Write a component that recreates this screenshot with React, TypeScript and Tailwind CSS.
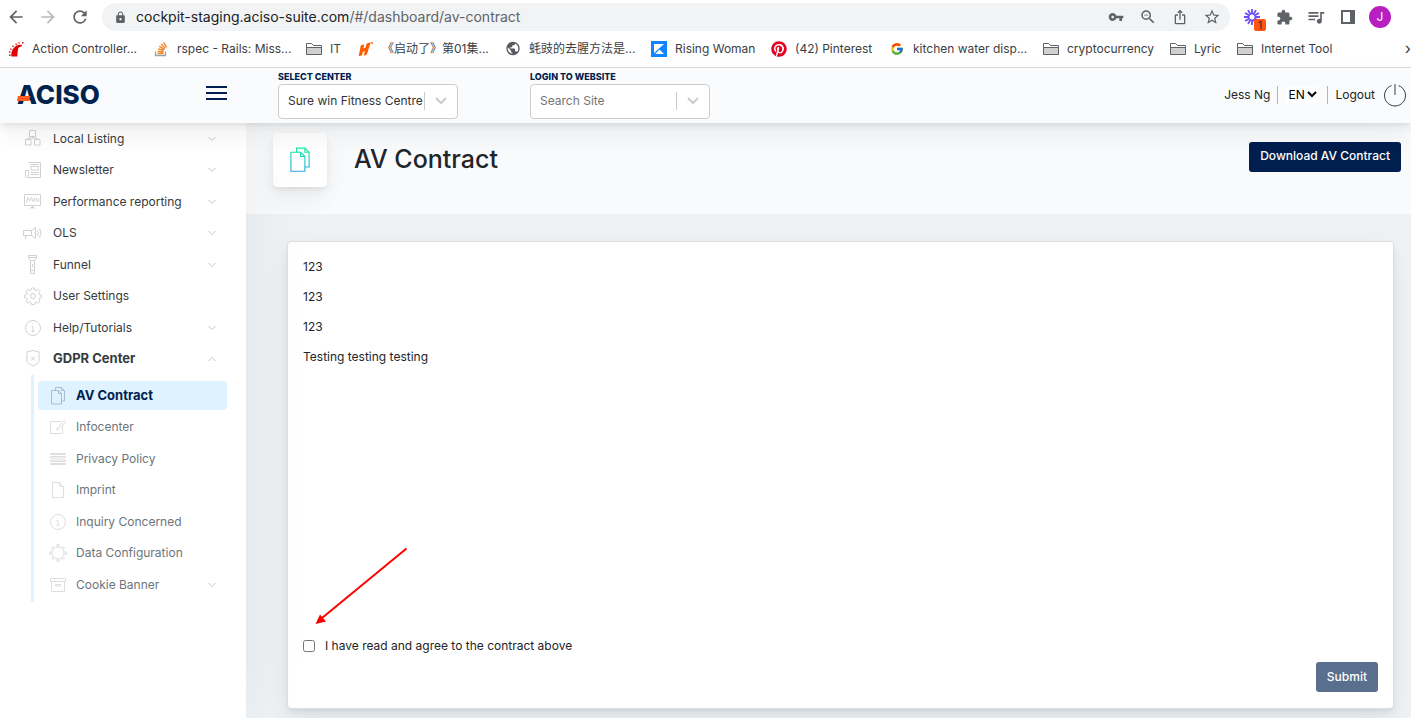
import React, { useState } from 'react';
import {
  MdArrowBack,
  MdArrowForward,
  MdExtension,
  MdIosShare,
  MdLock,
  MdPublic,
  MdQueueMusic,
  MdRefresh,
  MdStarOutline,
  MdVpnKey,
  MdZoomOut,
} from 'react-icons/md';
import { FcGoogle } from 'react-icons/fc';
import { FaPinterest } from 'react-icons/fa';

/* ---------- Bookmark icons ---------- */

const Folder = () => (
  <svg width="16" height="16" viewBox="0 0 16 16" fill="none" stroke="#5f6368">
    <path d="M.5 13.500v-11h5l2 2h8v9z" fill="#fff" />
    <path d="M.5 6.500h15v7H.5z" fill="#d0d0d0" />
  </svg>
);

const Rails = () => (
  <svg width="16" height="16" viewBox="0 0 16 16" fill="#e00000">
    <path d="M3.300 15.500c-.3-4 .7-7 3.200-9.300 2.200-2 4.700-2.800 7.500-2.200l-.3 1.500c-2.200 0-3.400 1-3.700 3-.3 2.500-.8 4.500-.6 7z" />
    <path d="M1 13.500h1.500V15H1zM1 10.200l1.600.4-.3 1.200-1.500-.4zM2.500 7.200l1.300.8-.7 1-1.300-.8zM5 4.200l1 1.200-1 .8-1-1.200zM8.500 2.200l.5 1.400-1.200.5-.5-1.400zM11.500 1.200l.2 1.400-1.200.2-.2-1.400zM14 1h1.500v1.500H14z" />
  </svg>
);

const StackOverflow = () => (
  <svg width="16" height="16" viewBox="0 0 16 16" fill="none">
    <path d="M2.500 10.500v4h10v-4" stroke="#a0a3a6" strokeWidth="1.300" />
    <path d="M4.500 12.500h6M4.600 10.300l5.900.7M5.100 7.900l5.700 1.600M6.300 5.400l5.100 3M8.200 3l4 4.400M10.600 1.300l3 5.100" stroke="#f48024" strokeWidth="1.300" />
  </svg>
);

const VideoSite = () => (
  <svg width="16" height="16" viewBox="0 0 16 16" fill="#ff5a00">
    <path d="M2.800 4.500l3.600-1.300-1 4.300 2-.8 1.300-4.200 4-1.300L8.900 13.500l-3.200 1.300 1.200-4.800-2 .8-1 3.700-3.200.5z" />
    <path d="M12.500 1l2.300.6.4 1.600-1.700-.8z" />
  </svg>
);

const Kickflip = () => (
  <svg width="16" height="16" viewBox="0 0 16 16">
    <path d="M0 0h16v16H0z" fill="#1184ff" />
    <path d="M3 3h10L3 12zM8.500 8.500l4.500 4.500H4z" fill="#fff" />
  </svg>
);

const BOOKMARKS = [
  { label: 'Action Controller...', icon: <Rails />, width: 'w-[105px]' },
  { label: 'rspec - Rails: Miss...', icon: <StackOverflow />, width: 'w-[113px]' },
  { label: 'IT', icon: <Folder />, width: 'w-3' },
  { label: '《启动了》第01集...', icon: <VideoSite />, width: 'w-[107px]' },
  { label: '蚝豉的去腥方法是...', icon: <MdPublic size={17} color="#55585c" />, width: 'w-[106px]' },
  { label: 'Rising Woman', icon: <Kickflip />, width: 'w-20' },
  { label: '(42) Pinterest', icon: <FaPinterest size={16} color="#e60023" />, width: 'w-[78px]' },
  { label: 'kitchen water disp...', icon: <FcGoogle size={14} />, width: 'w-[114px]' },
  { label: 'cryptocurrency', icon: <Folder />, width: 'w-[87px]' },
  { label: 'Lyric', icon: <Folder />, width: 'w-[27px]' },
  { label: 'Internet Tool', icon: <Folder />, width: 'w-[72px]' },
];

/* ---------- Line icons of the app ---------- */

const LineIcon: React.FC<{ children: React.ReactNode; className?: string }> = ({ children, className }) => (
  <svg viewBox="0 0 20 20" fill="none" stroke="currentColor" strokeWidth="1" className={`size-5 shrink-0 ${className ?? ''}`}>
    {children}
  </svg>
);

const CopyShape = () => (
  <>
    <path d="M3.500 4.500h7l3 3v10.500h-10zM10.500 4.500v3h3" />
    <path d="M7.500 4.500v-3h6l3 3v10.500h-3M13.500 1.500v3h3" />
  </>
);

const InfoShape = () => (
  <>
    <circle cx="10" cy="10" r="7.500" />
    <path d="M10 8.500v5M8.500 8.500H10M8.500 13.500h3M10 5.500v1" />
  </>
);

const MENU = [
  { label: 'Local Listing', arrow: true, icon: <path d="M6.500 1.500h6v6h-6zM2.500 10.500h5.500v5.500h-5.500zM11.500 10.500h5.500v5.500h-5.500zM9.500 7.500v2M5 10.500v-1.500h9v1.500" /> },
  { label: 'Newsletter', arrow: true, icon: <path d="M5.500 2.500h12v15H3.500a1 1 0 0 1-1-1v-6h3v6M8 6.500h7.500v3.500H8zM8 4.500h7.500M8 12.500h7.500M8 14.500h7.500" /> },
  { label: 'Performance reporting', arrow: true, icon: <path d="M1.500 2.500h16v11h-16zM9.500 13.500v3M6.500 16.500l3-1.500 3 1.500M3.500 10.500l1.500-5L7 9l1.500-3.500L10.500 10 12 5.500M16 8a1.500 1.500 0 1 1-3 0 1.500 1.500 0 0 1 3 0z" /> },
  { label: 'OLS', arrow: true, icon: <path d="M.5 7.500h8l4-3v11l-4-3h-8zM2.500 12.500v3.500M8.500 7.500v5M14.500 7q1.500 3 0 6M16.500 5q3 5 0 10" /> },
  { label: 'Funnel', arrow: true, icon: <path d="M5.500.5h8v2l-2 3v13h-4v-13l-2-3zM5.500 2.500h8M7.500 5.500h4M9.500 9v3M7.500 15.500h4" /> },
  { label: 'User Settings', arrow: false, icon: <><circle cx="10" cy="10" r="2.500" /><path d="M8.600 2h2.800l.5 2 1.300.6 1.900-1.200 1.900 1.900-1.200 1.900.6 1.400 2 .5v2.400l-2 .5-.6 1.400 1.200 1.900-1.900 1.900-1.900-1.200-1.300.6-.5 2H8.600l-.5-2-1.300-.6-1.900 1.200L3 15.400l1.200-1.900-.6-1.400-2-.5V9.100l2-.5.6-1.400L3 5.300l1.900-1.900 1.900 1.200L8.100 4z" /></> },
  { label: 'Help/Tutorials', arrow: true, icon: <InfoShape /> },
];

const GDPR_MENU = [
  { label: 'AV Contract', arrow: false, icon: <CopyShape /> },
  { label: 'Infocenter', arrow: false, icon: <path d="M13 4.500H2.500v12h12V8.500M17.500 2.500l-8 8-1 2.500 2.500-1 7-7.500" /> },
  { label: 'Privacy Policy', arrow: false, icon: <path d="M2.500 4.500h15v1h-15zM2.500 7.500h15v1.500h-15zM2.500 11h15v1.500h-15zM2.500 14.500h15v1h-15z" /> },
  { label: 'Imprint', arrow: false, icon: <path d="M4.500 2.500h7l4 4v11h-11zM11.500 2.500v4h4" /> },
  { label: 'Inquiry Concerned', arrow: false, icon: <InfoShape /> },
  { label: 'Data Configuration', arrow: false, icon: <><circle cx="10" cy="10" r="6" /><path d="M9 4V1.500h2V4M9 16v2.500h2V16M4 9H1.500v2H4M16 9h2.500v2H16M5 6.500L3.500 5 5 3.500 6.500 5M15 6.500L16.500 5 15 3.500 13.500 5M5 13.500L3.500 15 5 16.500 6.500 15M15 13.500l1.500 1.500-1.500 1.500-1.500-1.500" /></> },
  { label: 'Cookie Banner', arrow: true, icon: <path d="M2.500 3.500h15v3h-15zM3.500 6.500v10h13v-10M7.500 9.500h5v1.500h-5z" /> },
];

const Chevron: React.FC<{ up?: boolean }> = ({ up }) => (
  <svg viewBox="0 0 10 6" className="ml-auto h-1.5 w-2.5 shrink-0 text-[#c4c7ca]" fill="none" stroke="currentColor">
    <path d={up ? 'M1.500 5L5 1.500 8.500 5' : 'M1.500 1L5 4.500 8.500 1'} />
  </svg>
);

/* ---------- Browser ---------- */

interface ToolButtonProps {
  label: string;
  children: React.ReactNode;
}

const ToolButton: React.FC<ToolButtonProps> = ({ label, children }) => (
  <button aria-label={label} className="flex size-4 items-center justify-center [&>*]:shrink-0">
    {children}
  </button>
);

const BrowserBar = () => (
  <div className="border-b border-[#dadce0] bg-white">
    <div className="flex h-[34px] items-center pl-1.5 pr-[23px] text-[#5f6368]">
      <button aria-label="Back" className="mr-3"><MdArrowBack size={20} /></button>
      <button aria-label="Forward" className="mr-3 text-[#b8babd]"><MdArrowForward size={20} /></button>
      <button aria-label="Reload" className="mr-3"><MdRefresh size={20} /></button>
      <div className="flex h-7 min-w-0 flex-1 items-center rounded-full bg-[#f1f3f4] pl-3 pr-2.5">
        <MdLock size={13} className="mr-[9px] shrink-0" />
        <span className="flex-1 truncate text-sm text-[#5f6368]">
          <span className="text-[#202124]">cockpit-staging.aciso-suite.com</span>/#/dashboard/av-contract
        </span>
        <div className="flex items-center gap-4">
          <ToolButton label="Passwords"><MdVpnKey size={16} /></ToolButton>
          <ToolButton label="Zoom out"><MdZoomOut size={18} /></ToolButton>
          <ToolButton label="Share"><MdIosShare size={16} /></ToolButton>
          <ToolButton label="Bookmark this page"><MdStarOutline size={18} /></ToolButton>
        </div>
      </div>
      <div className="ml-3.5 flex items-center gap-4">
        <button aria-label="Loom, 1 notification" className="relative size-4">
          <svg viewBox="0 0 16 16" className="size-4" stroke="#6a4df5" strokeWidth="1.800" fill="none">
            <path d="M10.500 8H16M10.200 9.200l4.700 2.800M9.200 10.200l2.800 4.700M8 10.500V16M6.800 10.200L4 14.900M5.800 9.200L1.100 12M5.500 8H0M5.800 6.800L1.100 4M6.800 5.800L4 1.100M8 5.500V0M9.200 5.800L12 1.100M10.200 6.800L14.900 4" />
          </svg>
          <span className="absolute left-2.5 top-2.5 h-3 w-3 rounded-xs bg-[#ff5310] text-center text-[10px] leading-3 text-[#202124]">1</span>
        </button>
        <ToolButton label="Extensions"><MdExtension size={17} /></ToolButton>
        <ToolButton label="Media"><MdQueueMusic size={20} /></ToolButton>
        <ToolButton label="Side panel"><span className="size-3.5 border-2 border-r-[5px] border-[#5f6368]" /></ToolButton>
        <ToolButton label="Profile">
          <span className="size-[22px] rounded-full bg-[#b81fc0] text-xs leading-[22px] text-white">J</span>
        </ToolButton>
      </div>
    </div>
    <nav className="flex h-[33px] items-center gap-4 pb-1 pl-2 text-xs text-[#3c4043]">
      {BOOKMARKS.map((b) => (
        <a key={b.label} href="#" className="flex shrink-0 items-center gap-2">
          <span className="flex size-4 items-center justify-center">{b.icon}</span>
          <span className={`whitespace-nowrap ${b.width}`}>{b.label}</span>
        </a>
      ))}
      <button aria-label="More bookmarks" className="ml-auto shrink-0 pb-0.5 text-base leading-4">›</button>
    </nav>
  </div>
);

/* ---------- App ---------- */

interface PickerProps {
  id: string;
  label: string;
  value: string;
  placeholder?: boolean;
}

const Picker: React.FC<PickerProps> = ({ id, label, value, placeholder }) => (
  <div className="w-[180px]">
    <label htmlFor={id} className="block text-[9px] font-extrabold uppercase leading-3 text-[#001f4f]">{label}</label>
    <div className="mt-px flex h-[35px] items-center rounded border border-[#ccc] bg-white">
      <select
        id={id}
        className={`h-full min-w-0 flex-1 appearance-none pl-[9px] outline-none ${placeholder ? 'text-[#757575]' : 'text-[#333]'}`}
      >
        <option>{value}</option>
      </select>
      <span className="h-[18px] w-px bg-[#ccc]" />
      <svg viewBox="0 0 12 8" className="mx-2.5 h-2 w-3" fill="none" stroke="#ccc" strokeWidth="2">
        <path d="M1 1l5 5 5-5" />
      </svg>
    </div>
  </div>
);

const Header = () => (
  <header className="relative z-20 flex h-[55px] items-center bg-[#fafbfc] pb-0.5 text-xs text-[#212529] shadow-[0_7px_35px_rgba(4,9,20,0.03),0_15px_22px_rgba(4,9,20,0.03),0_4px_8px_rgba(4,9,20,0.05),0_2px_3px_rgba(4,9,20,0.03)]">
    <div className="flex w-[246px] shrink-0 items-center justify-between pl-[17px] pr-[19px]">
      <a href="#" className="relative text-[26px] font-extrabold leading-7 text-[#00224f]">
        ACISO
        <svg viewBox="0 0 14 5" className="absolute left-0 top-[15px] h-[5px] w-3.5">
          <path d="M1 0h12.500L12 5H0z" fill="#ff5a1f" />
        </svg>
      </a>
      <button aria-label="Toggle menu" className="flex w-[21px] flex-col gap-1 pb-1">
        <span className="h-0.5 bg-[#001f4f]" />
        <span className="h-0.5 bg-[#001f4f]" />
        <span className="h-0.5 bg-[#001f4f]" />
      </button>
    </div>
    <div className="ml-8 flex gap-[72px]">
      <Picker id="center" label="Select center" value="Sure win Fitness Centre" />
      <Picker id="site" label="Login to website" value="Search Site" placeholder />
    </div>
    <div className="ml-auto flex items-center pr-1">
      <span>Jess Ng</span>
      <span className="ml-[7px] h-[18px] w-px bg-[#adb5bd]" />
      <div className="mx-2 flex items-center bg-white px-0.5 text-black">
        <select aria-label="Language" className="appearance-none outline-none">
          <option>EN</option>
        </select>
        <svg viewBox="0 0 10 7" className="ml-0.5 h-[7px] w-2.5" fill="none" stroke="#000" strokeWidth="2">
          <path d="M1 1l4 4 4-4" />
        </svg>
      </div>
      <span className="mr-[7px] h-[18px] w-px bg-[#adb5bd]" />
      <button className="flex items-center gap-2">
        Logout
        <svg viewBox="0 0 24 24" className="size-6" fill="none" stroke="#343a40">
          <path d="M12 1v11M8.500 2.600a10.500 10.500 0 1 0 7 0" />
        </svg>
      </button>
    </div>
  </header>
);

const rowHeight = (i: number) => (i % 2 === 0 ? 'h-[31px]' : 'h-8');

const Sidebar = () => {
  const [open, setOpen] = useState(true);
  const [active, setActive] = useState('AV Contract');

  return (
    <aside className="relative z-10 w-[246px] shrink-0 bg-white text-xs text-[#343a40] shadow-[7px_0_60px_rgba(0,0,0,0.05)]">
      <ul>
        {MENU.map((m, i) => (
          <li key={m.label}>
            <a href="#" className={`flex items-center pl-[23px] pr-[29px] ${rowHeight(i)}`}>
              <LineIcon className="mr-2.5 text-[#cfd2d5]">{m.icon}</LineIcon>
              {m.label}
              {m.arrow && <Chevron />}
            </a>
          </li>
        ))}
        <li>
          <button onClick={() => setOpen(!open)} className="flex h-8 w-full items-center pl-[23px] pr-[29px] text-[13px] font-bold">
            <LineIcon className="mr-2.5 text-[#cfd2d5]">
              <path d="M10 1.500l6 1.500v9c0 2-3 3-6 5-3-2-6-3-6-5V3zM8 7.500l4 4M12 7.500l-4 4" />
            </LineIcon>
            GDPR Center
            <Chevron up={open} />
          </button>
          {open && (
            <ul className="ml-[31px] mr-[19px] border-l-[3px] border-[#def2ff] pb-0.5 pl-1 pt-[5px] text-[#6c757d]">
              {GDPR_MENU.map((m, i) => (
                <li key={m.label} className={`flex items-center ${rowHeight(i)}`}>
                  <a
                    href="#"
                    onClick={() => setActive(m.label)}
                    className={`flex h-[29px] w-full items-center rounded-sm px-2.5 ${active === m.label ? 'bg-[#def2ff] text-[13px] font-bold text-[#001f4f]' : ''}`}
                  >
                    <LineIcon className={`mr-2 ${active === m.label ? 'text-[#a9bdd0]' : 'text-[#dcdee0]'}`}>{m.icon}</LineIcon>
                    {m.label}
                    {m.arrow && <Chevron />}
                  </a>
                </li>
              ))}
            </ul>
          )}
        </li>
      </ul>
    </aside>
  );
};

const ContractCard = () => {
  const [agreed, setAgreed] = useState(false);

  return (
    <section className="relative ml-[41px] mr-[17px] mt-[27px] rounded border border-[#dcdee2] bg-white px-[15px] pb-4 pt-[15px] shadow-[0_7px_35px_rgba(4,9,20,0.03),0_15px_22px_rgba(4,9,20,0.03),0_4px_8px_rgba(4,9,20,0.05),0_2px_3px_rgba(4,9,20,0.03)]">
      <div className="flex min-h-[379px] flex-col gap-2.5 leading-5">
        <p>123</p>
        <p>123</p>
        <p>123</p>
        <p>Testing testing testing</p>
      </div>
      <label className="flex h-5 items-center gap-2.5">
        <input
          type="checkbox"
          checked={agreed}
          onChange={(e) => setAgreed(e.target.checked)}
          className="size-3"
        />
        I have read and agree to the contract above
      </label>
      <div className="mt-1.5 flex justify-end">
        <button className="h-[30px] rounded-[3px] bg-[#5a6e8d] px-[11px] font-medium text-white">Submit</button>
      </div>
      {/* pointer to the consent box */}
      <svg viewBox="0 0 94 78" className="pointer-events-none absolute left-[27px] top-[305px] h-[78px] w-[94px]">
        <path d="M91.500 1.500L7 71" stroke="#f00" strokeWidth="2" />
        <path d="M.5 77L5 67.500l6 7z" fill="#f00" />
      </svg>
    </section>
  );
};

export default function App() {
  return (
    <div className="flex h-screen flex-col overflow-hidden font-[Inter,'Noto_Sans_CJK_SC',sans-serif]">
      <BrowserBar />
      <Header />
      <div className="flex min-h-0 flex-1">
        <Sidebar />
        <main className="min-w-0 flex-1 bg-[#eff2f5] text-xs text-[#212529]">
          <div className="flex h-[91px] items-start bg-[#f9fafc] pl-[27px] pr-2.5 pt-2.5">
            <div className="flex size-[54px] items-center justify-center rounded bg-white shadow-[0_7px_35px_rgba(4,9,20,0.03),0_15px_22px_rgba(4,9,20,0.03),0_4px_8px_rgba(4,9,20,0.05),0_2px_3px_rgba(4,9,20,0.03)]">
              <svg viewBox="0 0 20 20" className="size-7" fill="none" stroke="url(#copy-gradient)" strokeWidth="0.800">
                <defs>
                  <linearGradient id="copy-gradient" gradientUnits="userSpaceOnUse" x1="0" y1="1" x2="0" y2="18">
                    <stop offset="0" stopColor="#0ef29b" />
                    <stop offset="1" stopColor="#30a5ec" />
                  </linearGradient>
                </defs>
                <CopyShape />
              </svg>
            </div>
            <h1 className="ml-[27px] mt-2 text-[25px] font-medium leading-9">AV Contract</h1>
            <button className="ml-auto mt-[9px] h-[30px] rounded-[3px] bg-[#001f4f] px-[11px] pb-0.5 font-medium text-white">
              Download AV Contract
            </button>
          </div>
          <ContractCard />
        </main>
      </div>
    </div>
  );
}
